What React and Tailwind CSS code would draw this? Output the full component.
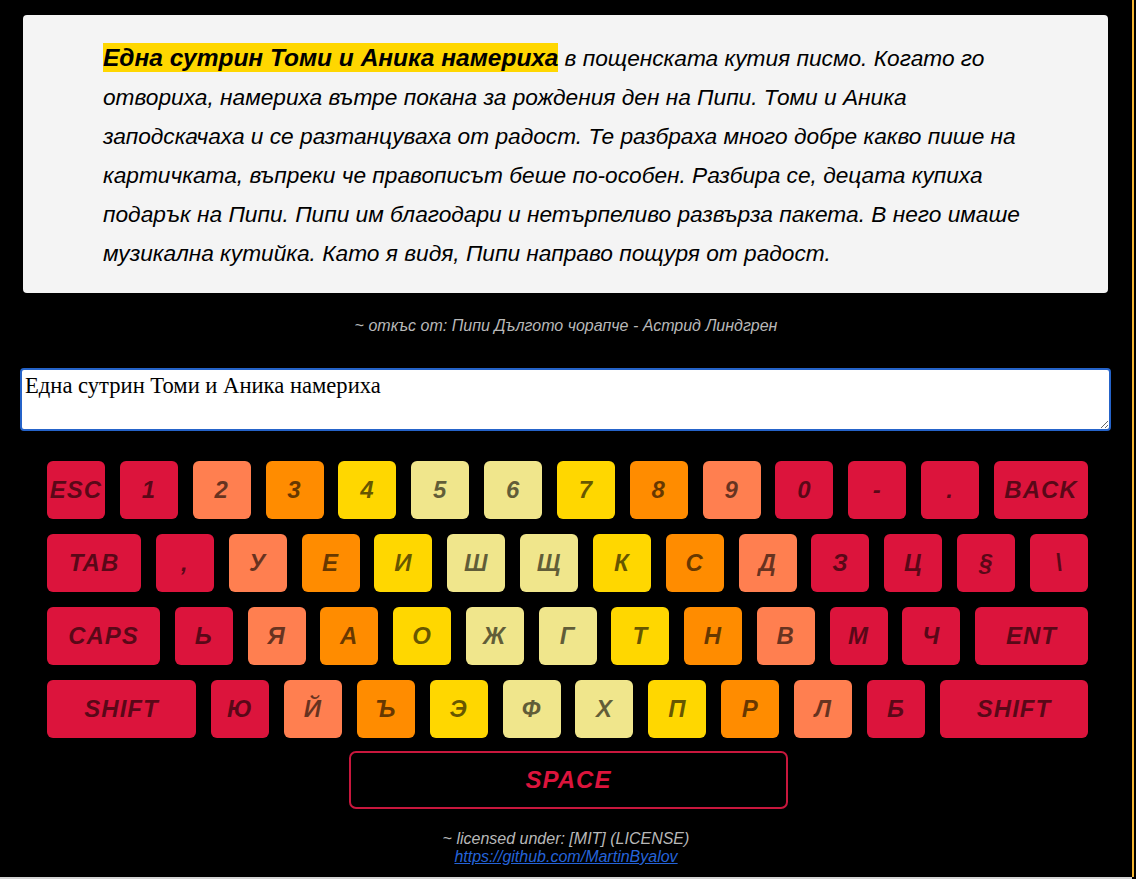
import React, { useEffect, useRef } from "react";

const C = {
  r: "bg-[#dc143c]",
  c: "bg-[#ff7f50]",
  o: "bg-[#ff8c00]",
  g: "bg-[#ffd700]",
  k: "bg-[#f0e68c]",
};

const rows = [
  [
    ["ESC", "r", "w-[58px]"], ["1", "r"], ["2", "c"], ["3", "o"], ["4", "g"], ["5", "k"], ["6", "k"],
    ["7", "g"], ["8", "o"], ["9", "c"], ["0", "r"], ["-", "r"], [".", "r"], ["BACK", "r", "w-[94px]"],
  ],
  [
    ["TAB", "r", "w-[94px]"], [",", "r"], ["У", "c"], ["Е", "o"], ["И", "g"], ["Ш", "k"], ["Щ", "k"],
    ["К", "g"], ["С", "o"], ["Д", "c"], ["З", "r"], ["Ц", "r"], ["§", "r"], ["\\", "r"],
  ],
  [
    ["CAPS", "r", "w-[113px]"], ["Ь", "r"], ["Я", "c"], ["А", "o"], ["О", "g"], ["Ж", "k"], ["Г", "k"],
    ["Т", "g"], ["Н", "o"], ["В", "c"], ["М", "r"], ["Ч", "r"], ["ENT", "r", "w-[113px]"],
  ],
  [
    ["SHIFT", "r", "w-[149px]"], ["Ю", "r"], ["Й", "c"], ["Ъ", "o"], ["Э", "g"], ["Ф", "k"], ["Х", "k"],
    ["П", "g"], ["Р", "o"], ["Л", "c"], ["Б", "r"], ["SHIFT", "r", "w-[148px]"],
  ],
];

function Key({ label, color, w }) {
  return (
    <div
      className={`${C[color]} ${w || "w-[58px]"} h-[58px] rounded-[6px] flex items-center justify-center text-black/60 text-[24px] font-bold italic tracking-[1px]`}
    >
      {label}
    </div>
  );
}

export default function App() {
  const ta = useRef(null);
  const value = "Една сутрин Томи и Аника намериха";
  useEffect(() => {
    if (ta.current) {
      ta.current.focus();
      ta.current.setSelectionRange(value.length, value.length);
    }
  }, []);

  return (
    <div
      className="w-[1136px] h-[879px] bg-black flex overflow-hidden"
      style={{ fontFamily: '"Liberation Sans", Arial, sans-serif' }}
    >
      <div className="w-[1132px] h-[879px] flex flex-col">
        <div className="flex-1 flex flex-col">
          <div className="ml-[23px] mt-[15px] w-[1085px] h-[278px] bg-[#f4f4f4] rounded-[4px] px-[80px] pt-[23px] text-[22.7px] leading-[39px] italic text-black">
            <span className="bg-[#ffd700] font-bold text-[24.5px] py-[1px]">{value}</span>{" "}
            в пощенската кутия писмо. Когато го отвориха, намериха вътре покана за рождения ден на Пипи. Томи и Аника заподскачаха и се разтанцуваха от радост. Те разбраха много добре какво пише на картичката, въпреки че правописът беше по-особен. Разбира се, децата купиха подарък на Пипи. Пипи им благодари и нетърпеливо развърза пакета. В него имаше музикална кутийка. Като я видя, Пипи направо пощуря от радост.
          </div>

          <div className="mt-[24px] text-center text-[16px] italic text-[#b8b8b8] leading-[18px]">
            ~ откъс от: Пипи Дългото чорапче - Астрид Линдгрен
          </div>

          <textarea
            ref={ta}
            readOnly
            value={value}
            className="ml-[20px] mt-[33px] w-[1091px] h-[63px] bg-white border-2 border-[#2563c9] rounded-[4px] outline-none px-[3px] pt-[3px] text-[22.6px] leading-[26px] text-black resize-y caret-black"
            style={{ fontFamily: '"Liberation Serif", "Times New Roman", serif' }}
          />

          <div className="ml-[47px] mt-[30px] w-[1041px] flex flex-col gap-[15px]">
            {rows.map((row, i) => (
              <div key={i} className="flex justify-between">
                {row.map(([l, c, w], j) => (
                  <Key key={j} label={l} color={c} w={w} />
                ))}
              </div>
            ))}
          </div>

          <div className="mt-[13px] ml-[349px] w-[439px] h-[58px] border-2 border-[#c8173d] rounded-[7px] flex items-center justify-center text-[#dc143c] text-[24px] font-bold italic tracking-[1px]">
            SPACE
          </div>

          <div className="mt-[21px] text-center text-[16px] italic text-[#b8b8b8] leading-[18px]">
            ~ licensed under: [MIT] (LICENSE)
          </div>
          <div className="text-center text-[16px] italic leading-[18px]">
            <a href="#" className="text-[#2563d9] underline">
              https://github.com/MartinByalov
            </a>
          </div>
        </div>
        <div className="h-[2px] bg-[#d4d4d4]" />
      </div>
      <div className="w-[2px] h-[877px] bg-[#f2b431]" />
    </div>
  );
}
